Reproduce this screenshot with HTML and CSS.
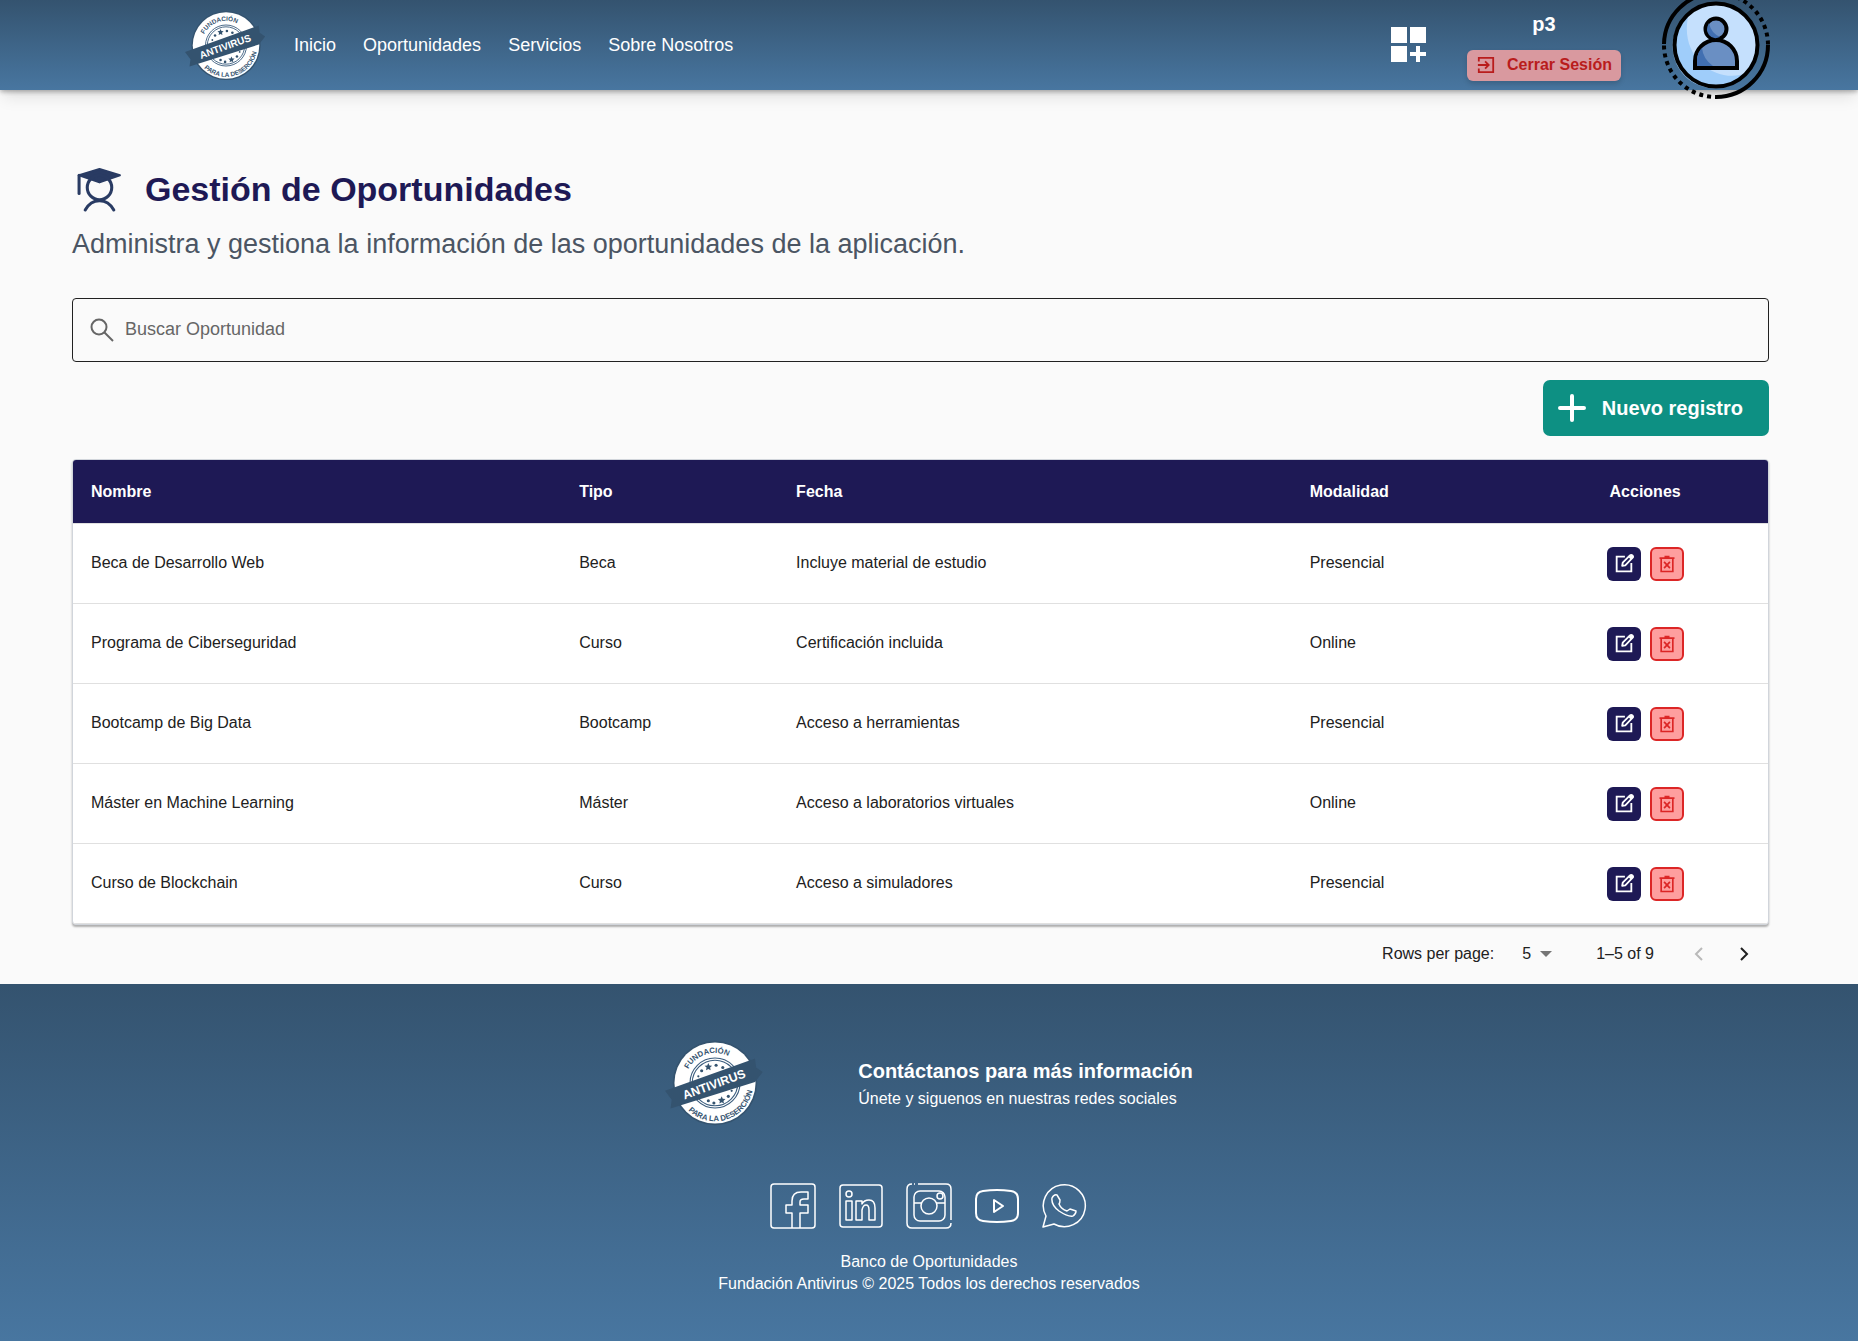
FILE: index.html
```
<!DOCTYPE html>
<html lang="es">
<head>
<meta charset="utf-8">
<title>Gestión de Oportunidades</title>
<link rel="stylesheet" href="styles.css">
</head>
<body>
<svg width="0" height="0" class="sprite" aria-hidden="true">
  <symbol id="edit" viewBox="0 0 24 24"><path d="M13 4H4v16h16v-9" fill="none" stroke="#fff" stroke-width="2"/><path d="M10 14l.6-3.400L18.500 2.700a1.700 1.700 0 0 1 2.700 2.700L13.400 13.400z" fill="none" stroke="#fff" stroke-width="2" stroke-linejoin="round"/><path d="M17 4.500L20 1.800l2.400 2.500-3 2.900z" fill="#fff"/></symbol>
  <symbol id="trash" viewBox="0 0 24 24"><path d="M3 5h18M9 3h6M5 5v16h14V5M8.500 9.500l7 7.500M15.500 9.500l-7 7.500" fill="none" stroke="#dc2626" stroke-width="2"/></symbol>
</svg>

<header class="topbar">
  <a href="#" aria-label="Fundación Antivirus"><svg class="brand" viewBox="0 0 90 84"><g id="logo">
    <circle cx="45" cy="42" r="38" fill="#34536f"/>
    <circle cx="45" cy="42" r="36.500" fill="#fff"/>
    <g fill="none" stroke="#3b5d7e" stroke-width="1"><circle cx="45" cy="42" r="22.500"/><circle cx="45" cy="42" r="20.500"/></g>
    <g fill="#34536f">
      <path d="M39 24l1 2.200 2.400.2-1.800 1.700.5 2.400-2.100-1.200-2.100 1.200.5-2.400-1.800-1.700 2.400-.2z"/>
      <circle cx="33" cy="31" r="1.400"/><circle cx="46" cy="26" r="1.400"/><circle cx="52" cy="28" r="1.400"/><circle cx="30" cy="36" r="1"/>
      <path d="M51 54l1 2.200 2.400.2-1.800 1.700.5 2.400-2.100-1.200-2.100 1.200.5-2.400-1.800-1.700 2.400-.2z"/>
      <circle cx="44" cy="60" r="1.400"/><circle cx="39" cy="58" r="1.400"/><circle cx="57" cy="54" r="1.400"/><circle cx="60" cy="49" r="1"/>
      <path d="M0 49L81 20l1 8 6 4-7 9L5 65l1-8z"/>
    </g>
    <path id="arc-top" d="M18 42a27 27 0 0 1 54 0" fill="none"/>
    <path id="arc-bottom" d="M15 59a34 34 0 0 0 60-34" fill="none"/>
    <text class="seal"><textPath href="#arc-top" startOffset="40%" text-anchor="middle">FUNDACIÓN</textPath></text>
    <text class="seal"><textPath href="#arc-bottom" startOffset="43%" text-anchor="middle">PARA LA DESERCIÓN</textPath></text>
    <text class="seal-name" x="44" y="47" text-anchor="middle" transform="rotate(-20 44 43)">ANTIVIRUS</text>
  </g></svg></a>
  <nav class="nav">
    <a href="#">Inicio</a><a href="#">Oportunidades</a><a href="#">Servicios</a><a href="#">Sobre Nosotros</a>
  </nav>
  <div class="account">
    <a href="#" aria-label="Panel"><svg class="apps" viewBox="0 0 36 36" fill="#fff"><path d="M0 0h16v16H0zM19 0h16v16H19zM0 19h16v16H0zM25 19h4v6h6v4h-6v6h-4v-6h-6v-4h6z"/></svg></a>
    <div class="session">
      <span class="user">p3</span>
      <button class="logout" type="button"><svg viewBox="0 0 20 20" fill="none" stroke="#b91c1c" stroke-width="2"><path d="M2 6V2h16v16H2v-4M1 10h12M9 6l4 4-4 4"/></svg>Cerrar Sesión</button>
    </div>
    <svg class="avatar" viewBox="0 0 108 108">
      <circle cx="54" cy="54" r="42" fill="#c5e0fd"/>
      <path d="M27 22a42 42 0 1 0 58 60C55 94 15 66 27 22z" fill="#9fcdfa"/>
      <circle cx="54" cy="54" r="41.500" fill="none" stroke="#000" stroke-width="4"/>
      <path d="M33 77v-7a21 21 0 0 1 42 0v7z" fill="#6a8fc3" stroke="#000" stroke-width="4"/>
      <path d="M35 75v-5q0-9 5-13 1 11 11 18z" fill="#416fb1"/>
      <circle cx="54" cy="38" r="10.500" fill="#6a8fc3" stroke="#000" stroke-width="4"/>
      <path d="M47 32q2 10 11 14-7 3-11-2-4-5 0-12z" fill="#416fb1"/>
      <g fill="none" stroke="#000" stroke-width="4"><path d="M2 53A52 52 0 0 1 54 2M106 54a52 52 0 0 1-52 52"/><path d="M54 2a52 52 0 0 1 52 52M54 106A52 52 0 0 1 2 54" stroke-dasharray="4 4" stroke-dashoffset="-5"/></g>
    </svg>
  </div>
</header>

<main class="page">
  <div class="heading">
    <svg viewBox="0 0 48 48" fill="none" stroke="#293b63" stroke-width="3" stroke-linecap="round" stroke-linejoin="round"><path d="M4 10L24 4l20 6-20 7z" fill="#293b63" stroke-width="2"/><path d="M4 10v18"/><circle cx="24" cy="22" r="12"/><path d="M10 44q5-9 14-9t14 9"/></svg>
    <h1>Gestión de Oportunidades</h1>
  </div>
  <p class="lead">Administra y gestiona la información de las oportunidades de la aplicación.</p>
  <label class="search">
    <svg viewBox="0 0 24 24" fill="none" stroke="#666" stroke-width="2"><circle cx="9" cy="9" r="7.500"/><path d="M14 14l9 9"/></svg>
    <input type="search" placeholder="Buscar Oportunidad" aria-label="Buscar Oportunidad">
  </label>
  <button class="create" type="button"><svg viewBox="0 0 28 28" stroke="#fff" stroke-width="4" stroke-linecap="round"><path d="M14 2v24M2 14h24"/></svg>Nuevo registro</button>

  <div class="card">
    <table>
      <colgroup><col class="c-name"><col class="c-type"><col class="c-date"><col class="c-mode"><col></colgroup>
      <thead><tr><th>Nombre</th><th>Tipo</th><th>Fecha</th><th>Modalidad</th><th class="center">Acciones</th></tr></thead>
      <tbody>
        <tr><td>Beca de Desarrollo Web</td><td>Beca</td><td>Incluye material de estudio</td><td>Presencial</td><td><div class="actions"><button class="edit" type="button" aria-label="Editar"><svg><use href="#edit"/></svg></button><button class="delete" type="button" aria-label="Eliminar"><svg><use href="#trash"/></svg></button></div></td></tr>
        <tr><td>Programa de Ciberseguridad</td><td>Curso</td><td>Certificación incluida</td><td>Online</td><td><div class="actions"><button class="edit" type="button" aria-label="Editar"><svg><use href="#edit"/></svg></button><button class="delete" type="button" aria-label="Eliminar"><svg><use href="#trash"/></svg></button></div></td></tr>
        <tr><td>Bootcamp de Big Data</td><td>Bootcamp</td><td>Acceso a herramientas</td><td>Presencial</td><td><div class="actions"><button class="edit" type="button" aria-label="Editar"><svg><use href="#edit"/></svg></button><button class="delete" type="button" aria-label="Eliminar"><svg><use href="#trash"/></svg></button></div></td></tr>
        <tr><td>Máster en Machine Learning</td><td>Máster</td><td>Acceso a laboratorios virtuales</td><td>Online</td><td><div class="actions"><button class="edit" type="button" aria-label="Editar"><svg><use href="#edit"/></svg></button><button class="delete" type="button" aria-label="Eliminar"><svg><use href="#trash"/></svg></button></div></td></tr>
        <tr><td>Curso de Blockchain</td><td>Curso</td><td>Acceso a simuladores</td><td>Presencial</td><td><div class="actions"><button class="edit" type="button" aria-label="Editar"><svg><use href="#edit"/></svg></button><button class="delete" type="button" aria-label="Eliminar"><svg><use href="#trash"/></svg></button></div></td></tr>
      </tbody>
    </table>
  </div>

  <div class="pager">
    <label for="rows">Rows per page:</label>
    <span class="rows"><select id="rows"><option>5</option><option>10</option><option>25</option></select><svg viewBox="0 0 12 6" fill="#757575"><path d="M0 0h12L6 6z"/></svg></span>
    <span class="range">1–5 of 9</span>
    <button type="button" aria-label="Página anterior" disabled><svg viewBox="0 0 10 14" fill="none" stroke="#b9b9b9" stroke-width="2"><path d="M8 1L2 7l6 6"/></svg></button>
    <button type="button" aria-label="Página siguiente"><svg viewBox="0 0 10 14" fill="none" stroke="#1f1f1f" stroke-width="2"><path d="M2 1l6 6-6 6"/></svg></button>
  </div>
</main>

<footer class="footer">
  <div class="contact">
    <svg class="brand-large" viewBox="0 0 90 84"><use href="#logo"/></svg>
    <div><h2>Contáctanos para más información</h2><p>Únete y siguenos en nuestras redes sociales</p></div>
  </div>
  <div class="social">
    <a href="#" aria-label="Facebook"><svg viewBox="0 0 46 46"><rect x="1" y="1" width="44" height="44" rx="3"/><path d="M22 45V30h-6v-8h6v-4q0-9 9-9h7v7h-4q-4 0-4 3v3h8v8h-8v15"/></svg></a>
    <a href="#" aria-label="LinkedIn"><svg viewBox="0 0 46 46"><rect x="2" y="2" width="42" height="42" rx="3"/><circle cx="11" cy="11" r="3"/><path d="M8 18h6v19H8zM18 18h6v3q2-4 7-4 6 0 6 8v12h-6V27q0-5-3-5t-4 5v10h-6z"/></svg></a>
    <a href="#" aria-label="Instagram"><svg viewBox="0 0 46 46"><path d="M6 1q-5 0-5 5v34q0 5 5 5h34q5 0 5-5M45 37V6q0-5-5-5H12M8 1h1"/><rect x="8" y="8" width="31" height="30" rx="6"/><circle cx="23" cy="23" r="8"/><circle cx="34" cy="13" r="3"/><path d="M8 20h8M30 20h9"/></svg></a>
    <a href="#" aria-label="YouTube"><svg viewBox="0 0 46 46"><path d="M9 8q14-2 28 0 7 1 7 8v14q0 7-7 8-14 2-28 0-7-1-7-8V16q0-7 7-8zM20 17v12l9-6z" stroke-width="2"/></svg></a>
    <a href="#" aria-label="WhatsApp"><svg viewBox="0 0 46 46"><path d="M1 44l3-11a21 21 0 1 1 8 8zM10 15q2-4 5-3l3 5q0 3-1 4 2 5 8 7l3-2 6 2q0 3-3 5-5 1-14-5-8-6-7-13z"/></svg></a>
  </div>
  <p>Banco de Oportunidades</p>
  <p>Fundación Antivirus © 2025 Todos los derechos reservados</p>
</footer>
</body>
</html>
```
FILE: styles.css
```
* { box-sizing: border-box; }
body { margin: 0; background: #fafafa; color: #212121; font: 16px/22px "Liberation Sans", Arial, sans-serif; min-height: 100vh; display: flex; flex-direction: column; }
h1, h2, p { margin: 0; }
a { color: inherit; text-decoration: none; }
button { font: inherit; border: 0; padding: 0; cursor: pointer; }
svg { display: block; flex: none; }
.sprite { position: absolute; }

.topbar { height: 90px; display: flex; align-items: center; padding: 0 88px 0 185px; color: #fff; background: linear-gradient(#34536f, #4876a0); box-shadow: 0 10px 15px -3px rgba(0,0,0,.1), 0 4px 6px -2px rgba(0,0,0,.1), 0 2px 4px rgba(0,0,0,.2); }
.brand { width: 82px; height: 77px; }
.nav { display: flex; gap: 27px; margin-left: 27px; font-size: 18px; }
.account { margin-left: auto; display: flex; align-items: center; }
.apps { width: 36px; height: 36px; }
.session { display: flex; flex-direction: column; align-items: center; gap: 15px; margin: 0 41px 0 40px; padding-top: 4px; }
.user { font-size: 20px; font-weight: 700; }
.logout { display: flex; align-items: center; gap: 12px; height: 31px; padding: 0 9px 2px 10px; border-radius: 6px; background: #d9999f; color: #b91c1c; font-weight: 700; box-shadow: 0 3px 5px rgba(0,0,0,.15); }
.logout svg { width: 18px; height: 18px; }
.avatar { width: 108px; height: 108px; }

.seal { font: 700 7px "Liberation Sans", Arial, sans-serif; fill: #34536f; }
.seal-name { font: 700 11px "Liberation Sans", Arial, sans-serif; fill: #fff; }

.page { padding: 75px 89px 1px 72px; display: flex; flex-direction: column; }
.heading { display: flex; align-items: center; gap: 21px; height: 48px; padding-left: 3px; }
.heading svg { width: 49px; height: 49px; }
h1 { font-size: 34px; line-height: 48px; color: #1e1955; }
.lead { margin-top: 13px; font-size: 27px; line-height: 36px; color: #4b5563; }
.search { display: flex; align-items: center; gap: 11px; height: 64px; margin-top: 36px; padding: 0 17px; border: 1px solid #212121; border-radius: 4px; }
.search svg { width: 24px; height: 24px; }
.search input { flex: 1; border: 0; outline: 0; padding: 0 0 2px; background: none; font: inherit; font-size: 18px; }
.search input::placeholder { color: #666; opacity: 1; }
.create { align-self: flex-end; display: flex; align-items: center; gap: 16px; height: 56px; margin-top: 18px; padding: 0 26px 0 15px; border-radius: 7px; background: #0d9083; color: #fff; font-size: 20px; font-weight: 700; }
.create svg { width: 28px; height: 28px; }

.card { margin-top: 23px; border: 1px solid #d1d5db; border-radius: 4px; background: #fff; overflow: hidden; box-shadow: 0 2px 2px rgba(0,0,0,.3); }
table { width: 100%; border-collapse: collapse; table-layout: fixed; }
.c-name { width: 28.800%; }
.c-type { width: 12.800%; }
.c-date { width: 30.300%; }
.c-mode { width: 13.600%; }
th, td { padding: 0 18px; text-align: left; border-bottom: 1px solid #e0e0e0; }
th { height: 63px; padding-top: 2px; background: #1e1955; color: #fff; }
td { height: 80px; }
.center { text-align: center; }
.actions { display: flex; justify-content: center; gap: 9px; padding-top: 2px; }
.actions button { width: 34px; height: 34px; display: grid; place-items: center; border-radius: 6px; }
.edit { background: #1e1955; }
.edit svg { width: 22px; height: 22px; }
.actions .delete { background: #fe9e9e; border: 2px solid #dc2626; }
.delete svg { width: 20px; height: 20px; }

.pager { display: flex; align-items: center; justify-content: flex-end; height: 58px; padding-right: 18px; }
.rows { display: flex; align-items: center; gap: 8px; margin: 0 44px 0 28px; }
.rows select { appearance: none; width: 10px; border: 0; padding: 0; background: none; font: inherit; color: inherit; }
.rows svg { width: 12px; height: 6px; }
.range { margin-right: 38px; }
.pager button { width: 14px; background: none; display: grid; place-items: center; }
.pager button + button { margin-left: 31px; }
.pager button svg { width: 10px; height: 14px; }

.footer { flex: 1; padding: 52px 0 46px; display: flex; flex-direction: column; align-items: center; color: #fff; background: linear-gradient(#34536f, #4876a0); }
.contact { display: flex; align-items: center; gap: 93px; }
.contact div { padding-top: 4px; }
.brand-large { width: 100px; height: 94px; }
h2 { font-size: 20px; line-height: 28px; }
.contact p { line-height: 28px; }
.social { display: flex; gap: 22px; margin: 53px 0 22px; }
.social svg { width: 46px; height: 46px; fill: none; stroke: #fff; stroke-width: 1.5; stroke-linejoin: round; }
```
